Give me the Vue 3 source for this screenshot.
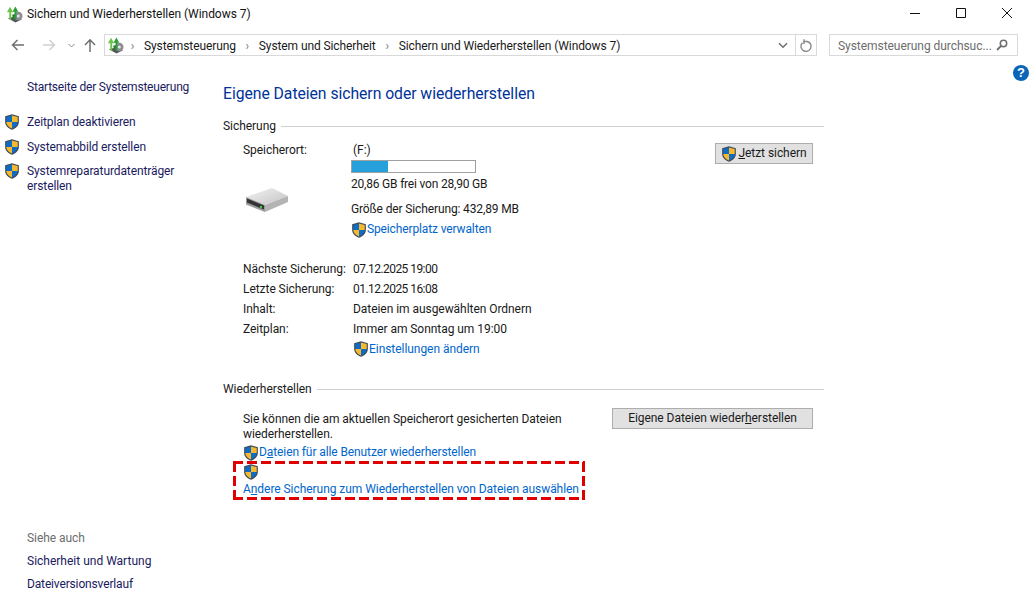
<script setup>
const schedule = [
  ['Nächste Sicherung:', '07.12.2025 19:00', true],
  ['Letzte Sicherung:', '01.12.2025 16:08', true],
  ['Inhalt:', 'Dateien im ausgewählten Ordnern', false],
  ['Zeitplan:', 'Immer am Sonntag um 19:00', false],
]
</script>

<template>
  <div class="window">
    <svg width="0" height="0" class="defs">
      <defs>
        <symbol id="shield" viewBox="1 0.4 14 15.4">
          <path d="M8 .6 14.6 2.6V8c0 3.6-3 6.2-6.6 7.6C4.400 14.200 1.400 11.600 1.400 8V2.600Z" fill="#3f4a57"/>
          <path d="M8 1.800V8H2.500V3.400Z" fill="#0f6cc4"/>
          <path d="M8 1.800 13.500 3.400V8H8Z" fill="#f5b82e"/>
          <path d="M2.500 8H8V14.300C5 13 2.700 11 2.500 8Z" fill="#f5b82e"/>
          <path d="M8 8H13.500C13.300 11 11 13 8 14.300Z" fill="#0f6cc4"/>
        </symbol>
        <symbol id="appicon" viewBox="0 0 18 18">
          <path d="M2 13 9 11 17 14 10 17.500Z" fill="#55575c"/>
          <circle cx="13" cy="10.500" r="4.500" fill="#8b8d92"/>
          <circle cx="13" cy="10.500" r="1.600" fill="#e4e6e9"/>
          <path d="M3.500 14V6.500H1L4.300 .8 7.500 6.500H5.500V15Z" fill="#6cc24a"/>
          <path d="M9 14V6H6.800L10 .5 13 6H11V14Z" fill="#2e9e36"/>
          <path d="M6.500 9 8 15.500 9.500 9Z" fill="#1f7a2a"/>
        </symbol>
      </defs>
    </svg>

    <header class="titlebar">
      <svg class="app-icon"><use href="#appicon" /></svg>
      <span class="title">Sichern und Wiederherstellen (Windows 7)</span>
      <div class="controls">
        <svg width="12" height="12" viewBox="0 0 12 12"><path d="M1 6.500H11" stroke="#111" /></svg>
        <svg width="12" height="12" viewBox="0 0 12 12"><path d="M1.500 1.500H10.500V10.500H1.500Z" stroke="#111" fill="none" /></svg>
        <svg width="12" height="12" viewBox="0 0 12 12"><path d="M1 1 11 11M11 1 1 11" stroke="#111" fill="none" /></svg>
      </div>
    </header>

    <nav class="navbar">
      <div class="nav-buttons">
        <svg width="14" height="12" viewBox="0 0 14 12"><path d="M13 6H2M6.500 1 1.500 6l5 5" fill="none" stroke="#6f6f6f" stroke-width="1.500" /></svg>
        <svg class="fwd" width="14" height="12" viewBox="0 0 14 12"><path d="M1 6H12M7.500 1l5 5-5 5" fill="none" stroke="#d0d0d0" stroke-width="1.500" /></svg>
        <svg class="drop" width="7" height="5" viewBox="0 0 7 5"><path d="M.5 1 3.500 4 6.500 1" fill="none" stroke="#8a8a8a" /></svg>
        <svg class="up" width="12" height="14" viewBox="0 0 12 14"><path d="M6 14V2M1 7 6 1.800l5 5.200" fill="none" stroke="#6f6f6f" stroke-width="1.500" /></svg>
      </div>
      <div class="address">
        <svg class="crumb-icon"><use href="#appicon" /></svg>
        <span class="sep first">›</span>
        <span class="crumb">Systemsteuerung</span>
        <span class="sep">›</span>
        <span class="crumb">System und Sicherheit</span>
        <span class="sep">›</span>
        <span class="crumb">Sichern und Wiederherstellen (Windows 7)</span>
        <svg class="addr-drop" width="10" height="7" viewBox="0 0 10 7"><path d="M1 1.200 5 5.200 9 1.200" fill="none" stroke="#6f6f6f" stroke-width="1.500" /></svg>
        <div class="refresh">
          <svg width="12" height="13" viewBox="0 0 12 13"><path d="M3.500 2.500H7.200C9.500 3.200 11 5 11 7.200A5 5 0 1 1 2.500 3.800" fill="none" stroke="#8a8a8a" stroke-width="1.400" /><path d="M4 .2V5" stroke="#8a8a8a" stroke-width="1.400" /></svg>
        </div>
      </div>
      <div class="search">
        <span>Systemsteuerung durchsuc...</span>
        <svg width="12" height="12" viewBox="0 0 12 12"><circle cx="7.500" cy="4.500" r="3.200" fill="none" stroke="#6f6f6f" stroke-width="1.500" /><path d="M5 7 1 11" stroke="#6f6f6f" stroke-width="1.800" /></svg>
      </div>
    </nav>

    <div class="help-row"><span class="help">?</span></div>

    <div class="body">
      <aside class="sidebar">
        <div>
          <a class="home">Startseite der Systemsteuerung</a>
          <ul class="tasks">
            <li><svg class="shield"><use href="#shield" /></svg><span>Zeitplan deaktivieren</span></li>
            <li><svg class="shield"><use href="#shield" /></svg><span>Systemabbild erstellen</span></li>
            <li><svg class="shield"><use href="#shield" /></svg><span>Systemreparaturdatenträger<br />erstellen</span></li>
          </ul>
        </div>
        <div class="see-also">
          <div class="see-title">Siehe auch</div>
          <a>Sicherheit und Wartung</a>
          <a class="history">Dateiversionsverlauf</a>
        </div>
      </aside>

      <main class="content">
        <h1>Eigene Dateien sichern oder wiederherstellen</h1>

        <div class="group-head"><span>Sicherung</span><i></i></div>
        <section class="backup">
          <div class="top-row">
            <div class="key-col">
              <div>Speicherort:</div>
              <svg class="drive" width="46" height="28" viewBox="0 0 46 28">
                <defs>
                  <linearGradient id="drv" x1="0" y1="0" x2="1" y2="1">
                    <stop offset="0" stop-color="#f2f2f2" />
                    <stop offset="1" stop-color="#c4c4c4" />
                  </linearGradient>
                </defs>
                <path d="M1 11 27 2 43 10 20 19Z" fill="url(#drv)" />
                <path d="M1 11 20 19V26L1 18.500Z" fill="#9a9a9a" />
                <path d="M2 12.500 19 19.500V23.500L2 16.500Z" fill="#333" />
                <path d="M20 19 43 10V16L20 26Z" fill="#b4b4b4" />
                <rect x="15" y="20" width="2" height="2" fill="#35d04a" />
              </svg>
            </div>
            <div class="drive-info">
              <div class="drive-name">(F:)</div>
              <div class="meter"><div class="meter-fill" :style="{ width: '29%' }"></div></div>
              <div class="free">20,86 GB frei von 28,90 GB</div>
              <div class="size">Größe der Sicherung: 432,89 MB</div>
              <a class="link shield-link"><svg class="shield"><use href="#shield" /></svg>Speicherplatz verwalten</a>
            </div>
            <button class="btn now"><svg class="shield"><use href="#shield" /></svg><span><u>J</u>etzt sichern</span></button>
          </div>

          <dl class="schedule">
            <template v-for="row in schedule" :key="row[0]">
              <dt>{{ row[0] }}</dt>
              <dd :class="{ date: row[2] }">{{ row[1] }}</dd>
            </template>
            <dt></dt>
            <dd><a class="link shield-link"><svg class="shield"><use href="#shield" /></svg>Einstellungen ändern</a></dd>
          </dl>
        </section>

        <div class="group-head restore-head"><span>Wiederherstellen</span><i></i></div>
        <section class="restore">
          <div class="restore-top">
            <p>Sie können die am aktuellen Speicherort gesicherten Dateien wiederherstellen.</p>
            <button class="btn restore-btn">Eigene Dateien wieder<u>h</u>erstellen</button>
          </div>
          <a class="link shield-link all"><svg class="shield"><use href="#shield" /></svg>D<u>a</u>teien für alle Benutzer wiederherstellen</a>
          <div class="marked">
            <svg class="shield"><use href="#shield" /></svg>
            <a class="link">A<u>n</u>dere Sicherung zum Wiederherstellen von Dateien auswählen</a>
          </div>
        </section>
      </main>
    </div>
  </div>
</template>

<style>
html, body { margin: 0; background: #fff; }
</style>

<style scoped>
.window {
  width: 1030px;
  height: 606px;
  overflow: hidden;
  background: #fff;
  color: #1a1a1a;
  font-family: Roboto, "Open Sans", sans-serif;
  font-size: 12px;
  line-height: 15px;
  letter-spacing: -0.05px;
  display: flex;
  flex-direction: column;
  position: relative;
}
.defs { position: absolute; }
.shield { width: 16px; height: 16px; flex: none; display: block; }
a { color: inherit; }
.titlebar {
  height: 28px;
  display: flex;
  align-items: center;
  padding-left: 6px;
  flex: none;
}
.app-icon { width: 17px; height: 17px; margin-right: 4px; }
.title { color: #111; }
.controls {
  margin-left: auto;
  display: flex;
  gap: 33px;
  padding-right: 17px;
  margin-top: -2px;
}
.controls svg:not(:last-child) { margin-right: 1px; }
.navbar {
  height: 22px;
  margin-top: 6px;
  margin-bottom: 1px;
  display: flex;
  align-items: center;
  flex: none;
}
.nav-buttons {
  width: 104px;
  display: flex;
  align-items: center;
  padding-left: 11px;
  box-sizing: border-box;
}
.fwd { margin-left: 17px; }
.drop { margin-left: 12px; }
.up { margin-left: 9px; }
.address {
  width: 713px;
  height: 22px;
  box-sizing: border-box;
  border: 1px solid #d9d9d9;
  display: flex;
  align-items: center;
  padding-left: 2px;
}
.crumb-icon { width: 17px; height: 17px; margin-top: 1px; }
.sep { color: #777; width: 23px; text-align: center; margin-top: 2px; }
.sep.first { margin-left: -3px; }
.crumb { color: #1a1a1a; letter-spacing: -0.1px; margin-top: 2px; }
.addr-drop { margin-left: auto; margin-right: 7px; }
.refresh {
  width: 20px;
  height: 20px;
  border-left: 1px solid #d9d9d9;
  display: flex;
  align-items: center;
  justify-content: center;
}
.search {
  width: 189px;
  height: 22px;
  box-sizing: border-box;
  margin-left: 12px;
  border: 1px solid #d9d9d9;
  display: flex;
  align-items: center;
  justify-content: space-between;
  padding: 0 9px 0 8px;
  color: #6d6d6d;
  white-space: nowrap;
}
.search span { margin-top: 2px; }
.help-row {
  height: 0;
  display: flex;
  justify-content: flex-end;
  padding-right: 1px;
}
.help {
  width: 16px;
  height: 16px;
  margin-top: 8px;
  border-radius: 50%;
  background: #0a64b8;
  color: #fff;
  font: bold 13px/16px "Liberation Sans", sans-serif;
  text-align: center;
  flex: none;
}
.body {
  flex: 1;
  display: flex;
  min-height: 0;
}
.sidebar {
  width: 223px;
  flex: none;
  display: flex;
  flex-direction: column;
  justify-content: space-between;
  padding: 23px 0 14px 27px;
  box-sizing: border-box;
  color: #1a1a5e;
}
.home { display: block; letter-spacing: -0.2px; }
.tasks { list-style: none; margin: 20px 0 0 -23px; padding: 0; letter-spacing: -0.1px; }
.tasks li { display: flex; gap: 7px; margin-bottom: 9px; }
.tasks li:nth-child(2) { margin-bottom: 8px; }
.tasks li:last-child { margin-bottom: 0; }
.tasks .shield { margin: -1px 0 1px; }
.see-title { color: #6d6d6d; margin-bottom: 8px; }
.see-also a { display: block; margin-top: 8px; letter-spacing: 0; }
.see-also .history { letter-spacing: -0.15px; }
.content { flex: 1; min-width: 0; padding-right: 206px; }
h1 {
  margin: 27px 0 0;
  font-size: 15.75px;
  line-height: 20px;
  font-weight: 400;
  color: #003399;
}
.group-head {
  display: flex;
  align-items: center;
  gap: 5px;
  margin-top: 15px;
  color: #1a1a1a;
}
.group-head i { flex: 1; height: 1px; background: #d0d0d0; }
.backup { padding: 9px 11px 0 20px; }
.top-row { display: flex; position: relative; }
.key-col { width: 108px; flex: none; }
.drive { display: block; margin: 28px 0 0 2px; }
.drive-info { flex: 1; }
.drive-name { padding-left: 2px; }
.meter {
  width: 125px;
  height: 13px;
  margin-top: 2px;
  box-sizing: border-box;
  border: 1px solid #a0a0a0;
  background: #fff;
}
.meter-fill { height: 100%; background: #26a0da; }
.free { margin-top: 4px; letter-spacing: -0.2px; }
.size { margin-top: 10px; letter-spacing: -0.13px; }
.link { color: #0066cc; }
.shield-link { display: flex; align-items: center; }
.drive-info .shield-link { margin-top: 4px; height: 17px; letter-spacing: -0.13px; }
.btn {
  box-sizing: border-box;
  height: 21px;
  border: 1px solid #adadad;
  background: #e1e1e1;
  color: #1a1a1a;
  font: inherit;
  letter-spacing: inherit;
  padding: 0;
  display: flex;
  align-items: center;
  justify-content: center;
  flex: none;
}
.now { width: 98px; margin-top: 0; gap: 1px; }
.schedule {
  display: grid;
  grid-template-columns: 110px 1fr;
  grid-auto-rows: 20px;
  margin: 21px 0 0;
  align-items: center;
}
dd { margin: 0; }
dd.date { letter-spacing: -0.55px; }
.restore-head { margin-top: 23px; }
.restore { padding: 11px 11px 0 20px; }
.restore-top {
  display: flex;
  justify-content: space-between;
  align-items: flex-start;
}
.restore-top p { margin: 0; width: 350px; padding-top: 4px; letter-spacing: -0.07px; }
.restore-btn { width: 201px; }
.all { margin-top: 2px; height: 17px; letter-spacing: -0.1px; }
.marked {
  margin: 0 0 0 -10px;
  width: 352px;
  height: 39px;
  box-sizing: border-box;
  padding: 3px 0 0 10px;
  white-space: nowrap;
  background:
    repeating-linear-gradient(90deg, #e00000 0 10px, transparent 10px 14px) top left / 100% 3px no-repeat,
    repeating-linear-gradient(90deg, #e00000 0 10px, transparent 10px 14px) bottom left / 100% 3px no-repeat,
    repeating-linear-gradient(0deg, #e00000 0 10px, transparent 10px 14px) top left / 3px 100% no-repeat,
    repeating-linear-gradient(0deg, #e00000 0 10px, transparent 10px 14px) top right / 3px 100% no-repeat;
}
.marked .shield { margin: 0; }
.marked a { display: block; margin-top: 2px; }
</style>
